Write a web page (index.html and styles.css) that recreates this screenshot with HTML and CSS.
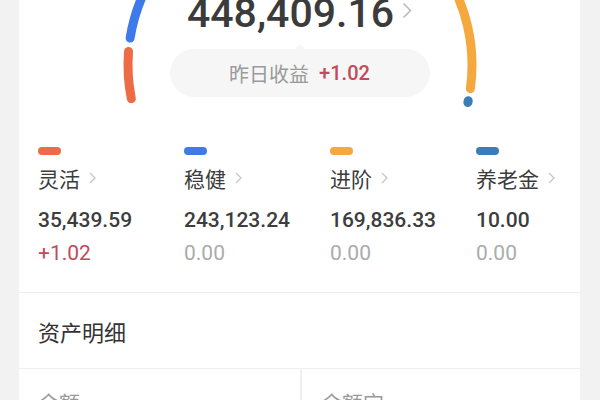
FILE: index.html
```html
<!DOCTYPE html>
<html lang="zh-CN">
<head>
<meta charset="utf-8">
<title>资产</title>
<link rel="stylesheet" href="styles.css">
</head>
<body>
<div class="page">
  <div class="card">
    <section class="summary">
      <svg class="gauge" viewBox="0 0 562 120" width="562" height="120" aria-hidden="true">
        <g fill="none" stroke-width="9" stroke-linecap="round">
          <path d="M112.34 98.70 A172 172 0 0 1 109.53 51.50" stroke="#ee6c45"/>
          <path d="M111.12 38.09 A172 172 0 0 1 310.87 -104.39" stroke="#3f7aea"/>
          <path d="M315.29 -103.55 A172 172 0 0 1 451.37 88.64" stroke="#f4a83d"/>
          <path d="M449.24 100.76 A172 172 0 0 1 448.86 102.52" stroke="#3a7db8"/>
        </g>
      </svg>
      <div class="total">
        <span class="total-value">448,409.16</span>
        <svg class="total-arrow" viewBox="0 0 10 17" width="10" height="17" aria-hidden="true"><polyline points="1.5,1.5 8.5,8.5 1.5,15.5" fill="none" stroke="#b9b9b9" stroke-width="1.5"/></svg>
      </div>
      <div class="yesterday">
        <span class="y-label">昨日收益</span>
        <span class="y-value">+1.02</span>
      </div>
    </section>

    <section class="legend">
      <div class="item">
        <i class="bar bar-flex"></i>
        <div class="name">灵活<svg class="chev" viewBox="0 0 7 12" width="7" height="12" aria-hidden="true"><polyline points="1,1 6,6 1,11" fill="none" stroke="#c6c6c6" stroke-width="1.3"/></svg></div>
        <div class="amount">35,439.59</div>
        <div class="change up">+1.02</div>
      </div>
      <div class="item">
        <i class="bar bar-steady"></i>
        <div class="name">稳健<svg class="chev" viewBox="0 0 7 12" width="7" height="12" aria-hidden="true"><polyline points="1,1 6,6 1,11" fill="none" stroke="#c6c6c6" stroke-width="1.3"/></svg></div>
        <div class="amount">243,123.24</div>
        <div class="change">0.00</div>
      </div>
      <div class="item">
        <i class="bar bar-advanced"></i>
        <div class="name">进阶<svg class="chev" viewBox="0 0 7 12" width="7" height="12" aria-hidden="true"><polyline points="1,1 6,6 1,11" fill="none" stroke="#c6c6c6" stroke-width="1.3"/></svg></div>
        <div class="amount">169,836.33</div>
        <div class="change">0.00</div>
      </div>
      <div class="item">
        <i class="bar bar-pension"></i>
        <div class="name">养老金<svg class="chev" viewBox="0 0 7 12" width="7" height="12" aria-hidden="true"><polyline points="1,1 6,6 1,11" fill="none" stroke="#c6c6c6" stroke-width="1.3"/></svg></div>
        <div class="amount">10.00</div>
        <div class="change">0.00</div>
      </div>
    </section>

    <section class="detail-head">资产明细</section>

    <section class="detail-row">
      <div class="cell">余额</div>
      <div class="cell">余额宝</div>
    </section>
  </div>
</div>
</body>
</html>
```

FILE: styles.css
```css
html, body {
  margin: 0;
  padding: 0;
  background: #f2f2f2;
}

body {
  font-family: Roboto, "Noto Sans CJK SC", sans-serif;
  color: #333;
}

.page {
  padding: 0 20px 0 19px;
}

.card {
  background: #fff;
  min-height: 420px;
}

.summary {
  position: relative;
  display: flex;
  flex-direction: column;
  align-items: center;
  height: 97px;
}

.gauge {
  position: absolute;
  left: 0;
  top: 0;
  overflow: visible;
}

.total {
  position: relative;
  display: flex;
  align-items: flex-start;
  gap: 8px;
  margin-top: -9px;
  height: 44px;
  line-height: 44px;
  font-size: 41px;
  font-weight: 500;
  color: #3b3b3b;
}

.total-arrow {
  margin-top: 11px;
}

.yesterday {
  position: relative;
  margin-top: 14px;
  width: 260px;
  height: 48px;
  border-radius: 24px;
  background: #f6f6f6;
  display: flex;
  align-items: center;
  justify-content: center;
  gap: 10px;
  font-size: 20px;
}

.yesterday::before {
  content: "";
  position: absolute;
  top: -5px;
  left: 50%;
  margin-left: -5px;
  border-left: 5px solid transparent;
  border-right: 5px solid transparent;
  border-bottom: 5px solid #f6f6f6;
}

.y-label {
  font-family: "Noto Sans CJK SC", sans-serif;
  color: #9a9a9a;
}

.y-value {
  font-weight: 500;
  color: #c24a5b;
}

.legend {
  display: grid;
  grid-template-columns: 146px 146px 146px auto;
  padding: 50px 0 27px 19px;
  border-bottom: 1px solid #efefef;
}

.item {
  display: flex;
  flex-direction: column;
  align-items: flex-start;
}

.bar {
  display: block;
  width: 23px;
  height: 8px;
  border-radius: 4px;
}

.bar-flex { background: #ee6c45; }
.bar-steady { background: #3f7aea; }
.bar-advanced { background: #f4a83d; }
.bar-pension { background: #3a7db8; }

.name {
  margin-top: 13px;
  display: flex;
  align-items: center;
  gap: 9px;
  font-family: "Noto Sans CJK SC", sans-serif;
  font-size: 21px;
  line-height: 20px;
  color: #3c3c3c;
}

.amount {
  margin-top: 20px;
  font-size: 21px;
  font-weight: 500;
  line-height: 24px;
  color: #3d3d3d;
}

.change {
  margin-top: 9px;
  font-size: 21px;
  line-height: 24px;
  color: #ababab;
}

.change.up {
  color: #c24a5b;
}

.detail-head {
  height: 75px;
  display: flex;
  align-items: center;
  padding-left: 19px;
  font-family: "Noto Sans CJK SC", sans-serif;
  font-size: 22px;
  color: #333;
  border-bottom: 1px solid #efefef;
}

.detail-row {
  display: grid;
  grid-template-columns: 281px 1fr;
}

.cell {
  padding: 18px 0 0 19px;
  height: 60px;
  font-family: "Noto Sans CJK SC", sans-serif;
  font-size: 21px;
  color: #9a9a9a;
}

.cell + .cell {
  border-left: 2px solid #f0f0f0;
}
```
